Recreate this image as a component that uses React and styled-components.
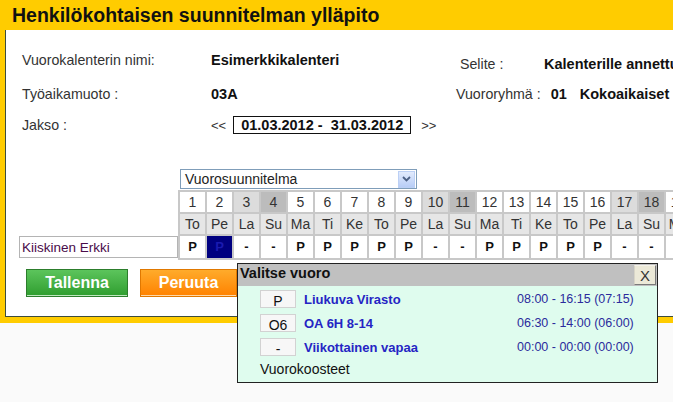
import React from 'react'
import styled, { createGlobalStyle } from 'styled-components'

const GlobalStyle = createGlobalStyle`
  html { overflow: hidden; background: #fafafa; }
  body {
    margin: 0;
    padding: 0;
    min-height: 402px;
    background: #fafafa;
    font-family: "Liberation Sans", Arial, sans-serif;
  }
`

const Page = styled.div`
  position: relative;
  width: 1060px;
  background: #ffcc00;
  padding: 0 0 6px 5px;
`

const Title = styled.h1`
  margin: 0;
  height: 30px;
  padding-left: 7px;
  line-height: 31px;
  font-size: 19.5px;
  font-weight: bold;
  color: #111;
  white-space: nowrap;
`

const Panel = styled.div`
  background: #fff;
  border-left: 1px solid #3d4d3d;
  border-bottom: 1px solid #3d4d3d;
  padding: 18px 0 19px 13px;
`

const InfoRow = styled.div`
  display: grid;
  grid-template-columns: 189px 245px 88px auto;
  align-items: center;
  height: 18px;
  margin: ${p => p.$gap || 0}px 0 0 3px;
  white-space: nowrap;
`

const Label = styled.div`
  font-size: 14.2px;
  color: #333;
  padding-top: ${p => p.$drop || 0}px;
  padding-left: ${p => p.$indent || 0}px;
`

const Value = styled.div`
  font-size: 14.5px;
  font-weight: bold;
  color: #111;
  padding-top: ${p => p.$drop || 0}px;
`

const Group = styled.div`
  grid-column: 3 / span 2;
  display: flex;
  align-items: center;
`

const GroupValue = styled.span`
  font-size: 14.5px;
  font-weight: bold;
  color: #111;
  margin-left: ${p => p.$space}px;
`

const Period = styled.div`
  display: flex;
  align-items: center;
  gap: 7px;
`

const Arrow = styled.span`
  font-size: 13px;
  color: #333;
  margin-left: ${p => p.$space || 0}px;
`

const PeriodBox = styled.div`
  width: 178px;
  height: 18px;
  box-sizing: border-box;
  border: 1px solid #111;
  text-align: center;
  line-height: 16px;
  font-size: 14.5px;
  font-weight: bold;
  color: #111;
  white-space: pre;
`

const Calendar = styled.div`
  margin-top: 35px;
`

const SelectBox = styled.div`
  margin-left: 161px;
  width: 237px;
  height: 20px;
  box-sizing: border-box;
  border: 1px solid #7f9db9;
  background: #fff;
  display: flex;
  align-items: center;
  justify-content: space-between;
`

const SelectText = styled.span`
  font-size: 14px;
  color: #222;
  padding-left: 4px;
`

const SelectButton = styled.span`
  width: 17px;
  height: 17px;
  margin-right: 1px;
  box-sizing: border-box;
  border: 1px solid #bcd0f5;
  background: linear-gradient(#e2ebfd, #b8cdf6);
  display: flex;
  align-items: center;
  justify-content: center;
`

const PlanRow = styled.div`
  display: flex;
  align-items: flex-end;
  margin-top: 1px;
`

const NameField = styled.input`
  width: 159px;
  height: 22px;
  box-sizing: border-box;
  margin: 0 0 2px 0;
  padding: 0 0 0 2px;
  border: 1px solid #b4b4b4;
  font-family: "Liberation Sans", Arial, sans-serif;
  font-size: 13.5px;
  color: #4a0c4a;
  background: #fff;
  outline: none;
`

const DayGrid = styled.div`
  display: grid;
  grid-template-columns: repeat(31, 25px);
  grid-template-rows: 20px 20px 22px;
  gap: 2px;
  padding: 2px;
  background: #c8c8c8;
`

const numberBg = { work: '#fff', sat: '#dcdcdc', sun: '#bcbcbc' }

const NumCell = styled.div`
  background: ${p => numberBg[p.$kind]};
  font-size: 14px;
  color: #333;
  text-align: center;
  line-height: 21px;
`

const NameCell = styled.div`
  background: #e6e6e6;
  font-size: 14px;
  color: #333;
  text-align: center;
  line-height: 21px;
`

const ValueCell = styled.div`
  background: ${p => (p.$selected ? '#000080' : '#fff')};
  color: ${p => (p.$selected ? '#1a1ab0' : '#111')};
  font-size: 13px;
  font-weight: bold;
  text-align: center;
  line-height: 22px;
`

const ButtonRow = styled.div`
  display: flex;
  gap: 12px;
  margin: 9px 0 0 7px;
`

const Button = styled.button`
  width: ${p => p.$width}px;
  height: 28px;
  padding: 0;
  border: 1px solid ${p => (p.$tone === 'green' ? '#2c7d2c' : '#e07800')};
  background: ${p =>
    p.$tone === 'green'
      ? 'linear-gradient(#5cc45c, #2f9d2f)'
      : 'linear-gradient(#ffab2b, #ff8200)'};
  box-shadow: inset 0 -1px 0 ${p => (p.$tone === 'green' ? '#bfe8bf' : '#ffd9a8')};
  color: #fff;
  font-family: "Liberation Sans", Arial, sans-serif;
  font-size: 16px;
  font-weight: bold;
`

const Popup = styled.div`
  position: absolute;
  left: 237px;
  top: 263px;
  width: 421px;
  height: 120px;
  box-sizing: border-box;
  border: 1px solid #222;
  background: #dffcee;
`

const PopupHeader = styled.div`
  height: 22px;
  background: #c0c0c0;
  display: flex;
  justify-content: space-between;
  align-items: flex-start;
  padding-left: 2px;
`

const PopupTitle = styled.span`
  font-size: 14.5px;
  font-weight: bold;
  color: #111;
  line-height: 19px;
`

const CloseButton = styled.span`
  width: 22px;
  height: 20px;
  margin: 1px 1px 0 0;
  box-sizing: border-box;
  border: 1px solid;
  border-color: #f4f2ea #7a7a7a #7a7a7a #d8d5c8;
  background: #ece9d8;
  font-size: 15px;
  color: #333;
  text-align: center;
  line-height: 19px;
`

const ShiftList = styled.div`
  display: grid;
  grid-template-columns: 36px 205px auto;
  grid-auto-rows: 18px;
  column-gap: 8px;
  row-gap: 6px;
  align-items: center;
  padding: 4px 0 0 22px;
`

const ShiftKey = styled.div`
  height: 18px;
  box-sizing: border-box;
  border: 1px solid #d2d2d2;
  background: #f7f7f7;
  font-size: 14px;
  color: #111;
  text-align: center;
  line-height: 20px;
  overflow: hidden;
`

const ShiftName = styled.span`
  font-size: 13px;
  font-weight: bold;
  color: #2525c4;
  white-space: nowrap;
`

const ShiftTime = styled.span`
  font-size: 12.5px;
  color: #2b2b9c;
  white-space: nowrap;
`

const PopupFooter = styled.div`
  padding: 5px 0 0 22px;
  font-size: 14px;
  color: #111;
  line-height: 16px;
`

const weekNames = ['Ma', 'Ti', 'Ke', 'To', 'Pe', 'La', 'Su']

const days = Array.from({ length: 31 }, (_, i) => {
  const wd = (i + 3) % 7
  return {
    num: i + 1,
    name: weekNames[wd],
    kind: wd === 5 ? 'sat' : wd === 6 ? 'sun' : 'work',
    value: wd >= 5 ? '-' : 'P',
  }
})

const shifts = [
  { key: 'P', name: 'Liukuva Virasto', time: '08:00 - 16:15 (07:15)' },
  { key: 'O6', name: 'OA 6H 8-14', time: '06:30 - 14:00 (06:00)' },
  { key: '-', name: 'Viikottainen vapaa', time: '00:00 - 00:00 (00:00)' },
]

function Chevron() {
  return (
    <svg width="9" height="6" viewBox="0 0 9 6">
      <path d="M1 1 L4.5 4.5 L8 1" fill="none" stroke="#4d6185" strokeWidth="1.8" />
    </svg>
  )
}

export default function App() {
  return (
    <>
      <GlobalStyle />
      <Page>
        <Title>Henkilökohtaisen suunnitelman ylläpito</Title>
        <Panel>
          <InfoRow>
            <Label>Vuorokalenterin nimi:</Label>
            <Value>Esimerkkikalenteri</Value>
            <Label $drop={8} $indent={4}>Selite :</Label>
            <Value $drop={8}>Kalenterille annettu selite</Value>
          </InfoRow>
          <InfoRow $gap={19}>
            <Label>Työaikamuoto :</Label>
            <Value>03A</Value>
            <Group>
              <Label>Vuororyhmä :</Label>
              <GroupValue $space={10}>01</GroupValue>
              <GroupValue $space={13}>Kokoaikaiset</GroupValue>
            </Group>
          </InfoRow>
          <InfoRow $gap={13}>
            <Label>Jakso :</Label>
            <Period>
              <Arrow>&lt;&lt;</Arrow>
              <PeriodBox>{'01.03.2012 -  31.03.2012'}</PeriodBox>
              <Arrow $space={3}>&gt;&gt;</Arrow>
            </Period>
          </InfoRow>

          <Calendar>
            <SelectBox>
              <SelectText>Vuorosuunnitelma</SelectText>
              <SelectButton>
                <Chevron />
              </SelectButton>
            </SelectBox>
            <PlanRow>
              <NameField value="Kiiskinen Erkki" readOnly />
              <DayGrid>
                {days.map(d => (
                  <NumCell key={'n' + d.num} $kind={d.kind}>{d.num}</NumCell>
                ))}
                {days.map(d => (
                  <NameCell key={'d' + d.num}>{d.name}</NameCell>
                ))}
                {days.map(d => (
                  <ValueCell key={'v' + d.num} $selected={d.num === 2}>{d.value}</ValueCell>
                ))}
              </DayGrid>
            </PlanRow>
          </Calendar>

          <ButtonRow>
            <Button $tone="green" $width={102}>Tallenna</Button>
            <Button $tone="orange" $width={97}>Peruuta</Button>
          </ButtonRow>
        </Panel>

        <Popup>
          <PopupHeader>
            <PopupTitle>Valitse vuoro</PopupTitle>
            <CloseButton>X</CloseButton>
          </PopupHeader>
          <ShiftList>
            {shifts.map(s => (
              <React.Fragment key={s.key}>
                <ShiftKey>{s.key}</ShiftKey>
                <ShiftName>{s.name}</ShiftName>
                <ShiftTime>{s.time}</ShiftTime>
              </React.Fragment>
            ))}
          </ShiftList>
          <PopupFooter>Vuorokoosteet</PopupFooter>
        </Popup>
      </Page>
    </>
  )
}
